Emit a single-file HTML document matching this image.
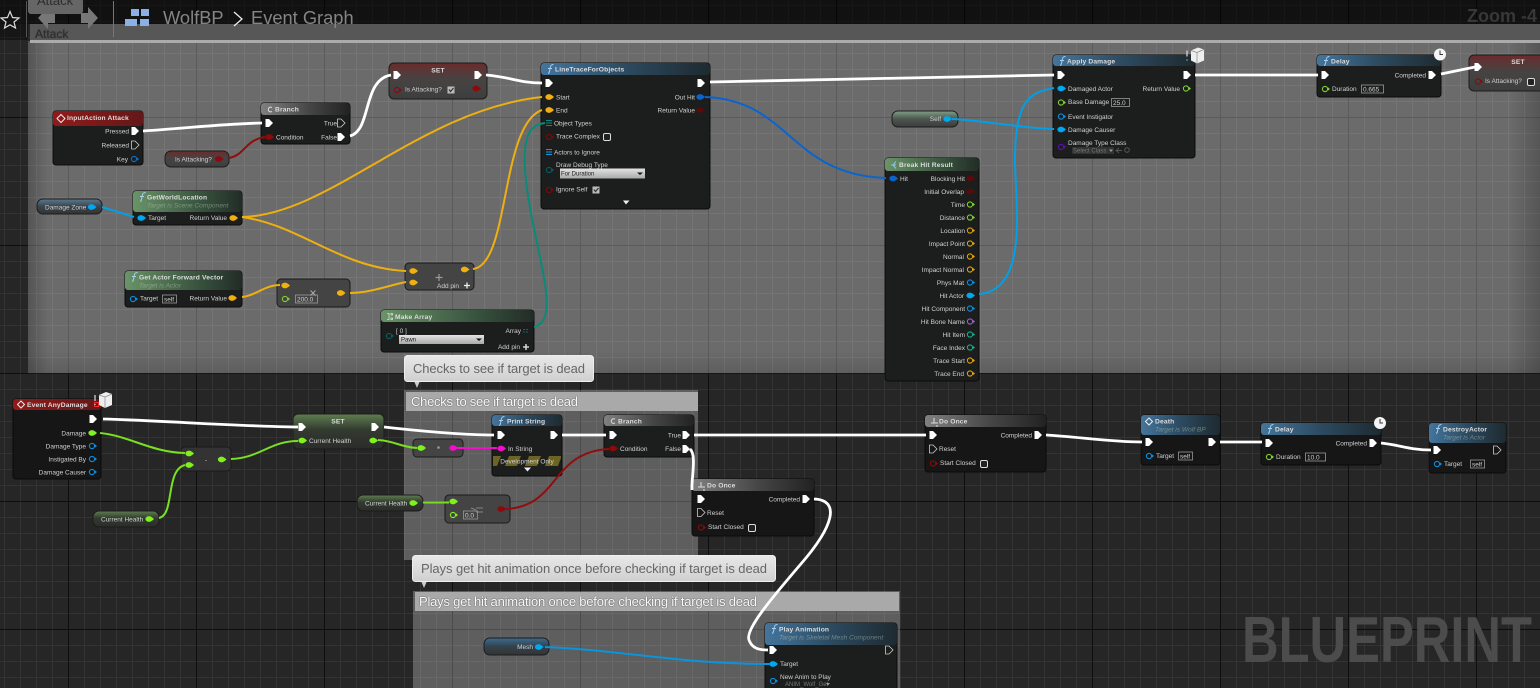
<!DOCTYPE html>
<html><head><meta charset="utf-8"><title>WolfBP Event Graph</title>
<style>
html,body{margin:0;padding:0;background:#262626;width:1540px;height:688px;overflow:hidden}
svg{display:block;font-family:"Liberation Sans",sans-serif;filter:blur(.3px)}
.t{font-size:6.5px;fill:#d0d0d0}
.r{text-anchor:end}
.c{text-anchor:middle}
.b{font-size:6.7px;font-weight:bold;fill:#dcdcdc;letter-spacing:.15px}
.s{font-size:6.6px;font-style:italic;fill:rgba(190,210,190,.45)}
.n{fill:#1c1e1d;stroke:#0b0b0b;stroke-width:1}
.g{fill:#444;stroke:#1a1a1a;stroke-width:1}
.box{fill:none;stroke:#999;stroke-width:.8}
.w{fill:none;stroke:#fff;stroke-width:2.8}
.wire{fill:none;stroke-width:2}
.ch{filter:drop-shadow(.6px .6px .4px #333)}
</style></head><body>
<svg width="1540" height="688" viewBox="0 0 1540 688" xmlns="http://www.w3.org/2000/svg">
<defs>
<pattern id="minor" width="16" height="16" patternUnits="userSpaceOnUse" x="4" y="5"><path d="M0 .5H16M.5 0V16" stroke="#343434" fill="none"/></pattern>
<pattern id="major" width="128" height="128" patternUnits="userSpaceOnUse" x="68" y="117"><path d="M0 .5H128M.5 0V128" stroke="#0e0e0e" fill="none"/></pattern>
<linearGradient id="hb"><stop offset="0" stop-color="#44759c"/><stop offset=".5" stop-color="#2c4a60"/><stop offset="1" stop-color="#1e2a30"/></linearGradient>
<linearGradient id="hg"><stop offset="0" stop-color="#6a9468"/><stop offset=".6" stop-color="#3a5540"/><stop offset="1" stop-color="#222c26"/></linearGradient>
<linearGradient id="hr"><stop offset="0" stop-color="#911a1a"/><stop offset="1" stop-color="#641818"/></linearGradient>
<linearGradient id="hk"><stop offset="0" stop-color="#808080"/><stop offset=".55" stop-color="#454545"/><stop offset="1" stop-color="#222"/></linearGradient>
<linearGradient id="gr" x2="0" y2="1"><stop offset="0" stop-color="#6b2c2c"/><stop offset=".45" stop-color="#474343"/><stop offset="1" stop-color="#3e3e3e"/></linearGradient>
<linearGradient id="gg" x2="0" y2="1"><stop offset="0" stop-color="#5f7f50"/><stop offset=".45" stop-color="#333a30"/><stop offset="1" stop-color="#2a2c2a"/></linearGradient>
<linearGradient id="gc" x2="0" y2="1"><stop offset="0" stop-color="#5a7a90"/><stop offset=".5" stop-color="#3a444c"/><stop offset="1" stop-color="#333"/></linearGradient>
<linearGradient id="gs" x2="0" y2="1"><stop offset="0" stop-color="#80a088"/><stop offset=".5" stop-color="#4c564e"/><stop offset="1" stop-color="#3c3c3c"/></linearGradient>
<linearGradient id="gm" x2="0" y2="1"><stop offset="0" stop-color="#3c6c90"/><stop offset=".5" stop-color="#33424c"/><stop offset="1" stop-color="#333"/></linearGradient>
<linearGradient id="tip" x2="0" y2="1"><stop offset="0" stop-color="#e8e8e8"/><stop offset="1" stop-color="#cfcfcf"/></linearGradient>
<linearGradient id="dd" x2="0" y2="1"><stop offset="0" stop-color="#e4e4e4"/><stop offset="1" stop-color="#aaa"/></linearGradient>
<linearGradient id="edge"><stop offset="0" stop-color="#000" stop-opacity=".22"/><stop offset="1" stop-color="#000" stop-opacity="0"/></linearGradient>
<linearGradient id="edgeb" x2="0" y2="1"><stop offset="0" stop-color="#000" stop-opacity="0"/><stop offset="1" stop-color="#000" stop-opacity=".12"/></linearGradient>
<linearGradient id="edger"><stop offset="0" stop-color="#000" stop-opacity="0"/><stop offset="1" stop-color="#000" stop-opacity=".2"/></linearGradient>
<path id="x" d="M-3.500-4H0L4 0 0 4H-3.500Z" fill="#fff"/>
<path id="xo" d="M-3.500-4H0L4 0 0 4H-3.500Z" fill="none" stroke="#ccc" stroke-width=".8"/>
<g id="d"><ellipse rx="3.600" ry="2.900" fill="currentColor"/><path d="M3-1.800 5 0 3 1.800Z" fill="currentColor"/></g>
<g id="h"><circle r="2.600" fill="none" stroke="currentColor" stroke-width="1.100"/><path d="M3-1.600 5 0 3 1.600Z" fill="currentColor"/></g>
<g id="f"><path d="M1 4.500C3 4.500 2.500 0 3.500-2.500 4-4 5-4.500 6.500-4.500M1-.5H5" fill="none" stroke="#a8d0f0" stroke-width="1"/></g>
<g id="cb"><rect x="-3.500" y="-3.500" width="7" height="7" rx="1.500" fill="#222" stroke="#ddd" stroke-width="1"/></g>
<g id="ck"><rect x="-3.500" y="-3.500" width="7" height="7" fill="#bbb"/><path d="M-2-.5-.5 1.500 2.500-2" fill="none" stroke="#333" stroke-width="1.200"/></g>
<g id="cube"><path d="M0 3 7 0 13 2V13L6 16 0 13Z" fill="#eee"/><path d="M6 5V16M0 3 6 5 13 2" fill="none" stroke="#888" stroke-width=".7"/><path d="M-4 3V9M-4 12V13" stroke="#ddd" stroke-width="1.200"/></g>
<g id="clock"><circle r="6" fill="#f4f4f4"/><path d="M0-4V0H3" fill="none" stroke="#333" stroke-width="1"/></g>
</defs>

<!-- background -->
<rect width="1540" height="688" fill="#262626"/>
<rect width="1540" height="688" fill="url(#minor)"/>
<rect width="1540" height="688" fill="url(#major)"/>
<rect width="1540" height="24" fill="#000" opacity=".55"/>
<rect y="24" width="28" height="16" fill="#000" opacity=".4"/>

<!-- top comment -->
<rect x="28" y="41" width="1512" height="332" fill="#fff" opacity=".32"/>
<rect x="28" y="41" width="20" height="332" fill="url(#edge)"/>
<rect x="28" y="350" width="1512" height="23" fill="url(#edgeb)"/>
<rect x="1510" y="41" width="30" height="332" fill="url(#edger)"/>
<rect x="30" y="24" width="1510" height="16" fill="#575757"/>
<rect x="30" y="40" width="1510" height="3" fill="#ababab"/>
<rect x="28" y="373" width="1512" height="1" fill="#161616"/>

<!-- lower comments -->
<rect x="404" y="390" width="294" height="170" fill="#fff" opacity=".26"/>
<rect x="406" y="392" width="292" height="19" fill="#a9a9a9"/>
<rect x="413" y="591" width="487" height="97" fill="#fff" opacity=".26"/>
<rect x="415" y="592" width="484" height="19" fill="#a9a9a9"/>
<text class="ch" x="411" y="406" font-size="13" fill="#fafafa" textLength="167">Checks to see if target is dead</text>
<text class="ch" x="419" y="606" font-size="13" fill="#fafafa" textLength="338">Plays get hit animation once before checking if target is dead</text>

<!-- editor top bar -->
<path d="M10 11.500 12.500 17.500 19 18 14 22 15.500 28 10 24.800 4.500 28 6 22 1 18 7.500 17.500Z" fill="none" stroke="#ddd" stroke-width="1.200"/>
<rect x="26" y="1" width="1" height="36" fill="#555"/>
<rect x="113" y="1" width="1" height="36" fill="#777"/>
<path d="M38 18 48 7V13H55V23H48V29Z" fill="#777"/>
<path d="M98 18 88 7V13H81V23H88V29Z" fill="#777"/>
<rect x="28" y="-6" width="55" height="20" rx="3" fill="#666"/>
<text x="37" y="5" font-size="13" fill="#2c2c2c">Attack</text>
<text x="35" y="38" font-size="12" fill="#2e2e2e" class="ch">Attack</text>
<g fill="#8cb0e6"><rect x="131" y="9" width="8" height="7"/><rect x="141" y="9" width="8" height="7"/><rect x="125" y="19" width="12" height="7"/><rect x="140" y="19" width="9" height="7"/></g>
<text x="163" y="24" font-size="18.300" fill="#858585">WolfBP</text>
<path d="M234 12 242 19 234 26" fill="none" stroke="#eee" stroke-width="1.300"/>
<text x="251" y="24" font-size="18.300" fill="#858585">Event Graph</text>
<text x="1467" y="22" font-size="18" font-weight="bold" fill="#383838">Zoom -4</text>

<!-- BLUEPRINT -->
<text x="1242" y="662" font-size="65" font-weight="bold" fill="#4c4c4c" textLength="290" lengthAdjust="spacingAndGlyphs">BLUEPRINT</text>

<!-- nodes -->
<g>
<!-- InputAction Attack -->
<rect class="n" x="53" y="111" width="90" height="54" rx="3"/>
<rect x="53" y="111" width="90" height="15" rx="3" fill="url(#hr)"/>
<path d="M61 114.500 65 118.500 61 122.500 57 118.500Z" fill="none" stroke="#eee"/>
<text class="b" x="67" y="120">InputAction Attack</text>
<text class="t r" x="129" y="133.500">Pressed</text><use href="#x" x="135" y="131"/>
<text class="t r" x="129" y="147.500">Released</text><use href="#xo" x="135" y="145"/>
<text class="t r" x="128" y="161.500">Key</text><use href="#h" x="134" y="159" color="#0a6ecc"/>

<!-- Branch -->
<rect class="n" x="261" y="103" width="89" height="41" rx="3"/>
<rect x="261" y="103" width="89" height="12" rx="3" fill="url(#hk)"/>
<path d="M272 107.500C267 105.500 267 113.500 272 111.500" fill="none" stroke="#ddd"/>
<text class="b" x="275" y="111.500">Branch</text>
<use href="#x" x="269" y="123"/>
<text class="t r" x="337" y="125.500">True</text><use href="#xo" x="341" y="123"/>
<use href="#d" x="269" y="137" color="#8c0a0a"/><text class="t" x="276" y="139.500">Condition</text>
<text class="t r" x="337" y="139.500">False</text><use href="#x" x="341" y="137"/>

<!-- Is Attacking var -->
<rect x="165" y="151" width="64" height="16" rx="6" fill="url(#gr)" stroke="#1c1c1c"/>
<text class="t" x="175" y="161.500">Is Attacking?</text>
<use href="#d" x="218.500" y="159" color="#8c0a0a"/>

<!-- SET red -->
<rect x="389" y="63" width="98" height="36" rx="5" fill="url(#gr)" stroke="#1c1c1c"/>
<text class="b c" x="438" y="72.500">SET</text>
<use href="#x" x="397" y="75"/><use href="#x" x="478" y="75"/>
<use href="#h" x="397" y="90" color="#8c0a0a"/><text class="t" x="405" y="91.500">Is Attacking?</text>
<use href="#ck" x="451" y="90"/>
<use href="#d" x="476" y="88.500" color="#8c0a0a"/>

<!-- Damage Zone -->
<rect x="37" y="199" width="65" height="15" rx="6" fill="url(#gc)" stroke="#1c1c1c"/>
<text class="t" x="45" y="209.500">Damage Zone</text>
<use href="#d" x="91.500" y="207" color="#00a8f0"/>

<!-- GetWorldLocation -->
<rect class="n" x="133" y="191" width="109" height="34" rx="3"/>
<rect x="133" y="191" width="109" height="21" rx="3" fill="url(#hg)"/>
<use href="#f" x="139" y="197"/>
<text class="b" x="147" y="199.500">GetWorldLocation</text>
<text class="s" x="147" y="207.500">Target is Scene Component</text>
<use href="#d" x="141" y="218" color="#00a8f0"/><text class="t" x="148" y="220">Target</text>
<text class="t r" x="227" y="220">Return Value</text><use href="#d" x="233" y="218" color="#f0b010"/>

<!-- Forward vector -->
<rect class="n" x="125" y="271" width="117" height="36" rx="3"/>
<rect x="125" y="271" width="117" height="19" rx="3" fill="url(#hg)"/>
<use href="#f" x="131" y="277"/>
<text class="b" x="139" y="279.500">Get Actor Forward Vector</text>
<text class="s" x="139" y="287.500">Target is Actor</text>
<use href="#h" x="133" y="299" color="#0a8fe0"/><text class="t" x="140" y="300.500">Target</text>
<rect class="box" x="162.500" y="295" width="14" height="8"/><text class="t" x="164" y="301.500">self</text>
<text class="t r" x="227" y="300.500">Return Value</text><use href="#d" x="232" y="298" color="#f0b010"/>

<!-- multiply -->
<rect class="g" x="277" y="279" width="73" height="28" rx="4"/>
<use href="#d" x="285" y="285.500" color="#f0b010"/>
<use href="#h" x="285" y="299" color="#7fd030"/>
<rect class="box" x="295.500" y="295" width="22" height="8"/><text class="t" x="297" y="301.500">200.0</text>
<path d="M310.500 290.500 315.500 295.500M315.500 290.500 310.500 295.500" stroke="#aaa" stroke-width="1"/>
<use href="#d" x="340.500" y="293" color="#f0b010"/>

<!-- add -->
<rect class="g" x="405" y="263" width="69" height="27" rx="4"/>
<use href="#d" x="413" y="271" color="#f0b010"/><use href="#d" x="413" y="282.500" color="#f0b010"/>
<use href="#d" x="464.500" y="269.500" color="#f0b010"/>
<path d="M439 274V281M435.500 277.500H442.500" stroke="#999" stroke-width="1.200"/>
<text class="t" x="437" y="288">Add pin</text>
<path d="M467 282.500V288.500M464 285.500H470" stroke="#eee" stroke-width="1.300"/>

<!-- Make Array -->
<rect class="n" x="381" y="310" width="153" height="42" rx="3"/>
<rect x="381" y="310" width="153" height="12" rx="3" fill="url(#hg)"/>
<path d="M387 313.500H389V319.500H387M391 313.500H392.500V315H391ZM391 318H392.500V319.500H391Z" fill="none" stroke="#ddd" stroke-width=".8"/>
<text class="b" x="395" y="319">Make Array</text>
<use href="#h" x="389" y="336" color="#0a5c5c"/>
<text class="t" x="396" y="333">[ 0 ]</text>
<rect x="399" y="335" width="85" height="9" fill="url(#dd)"/><text x="401" y="341.500" font-size="6" fill="#222">Pawn</text><path d="M476 338.500H482L479 341Z" fill="#111"/>
<text class="t r" x="521" y="333">Array</text>
<path d="M523 329.500h2m1 0h2M523 332h2m1 0h2" stroke="#0a6a6a"/>
<text class="t r" x="520" y="349">Add pin</text>
<path d="M526 344V350M523 347H529" stroke="#eee" stroke-width="1.300"/>

<!-- LineTrace -->
<rect class="n" x="541" y="63" width="169" height="146" rx="3"/>
<rect x="541" y="63" width="169" height="12" rx="3" fill="url(#hb)"/>
<use href="#f" x="547" y="69"/>
<text class="b" x="555" y="71.500">LineTraceForObjects</text>
<use href="#x" x="549" y="83"/><use href="#x" x="701" y="83"/>
<use href="#d" x="549" y="97" color="#f0b010"/><text class="t" x="556" y="99.500">Start</text>
<text class="t r" x="695" y="99.500">Out Hit</text><use href="#d" x="700" y="97" color="#0a64d0"/>
<use href="#d" x="549" y="110" color="#f0b010"/><text class="t" x="556" y="112.500">End</text>
<text class="t r" x="695" y="112.500">Return Value</text><use href="#d" x="700" y="110" color="#5a0a0a"/>
<path d="M546 120.500H552M546 123H552M546 125.500H552" stroke="#0a8a7a" stroke-width="1.100"/>
<text class="t" x="554" y="125.500">Object Types</text>
<use href="#h" x="549" y="137" color="#7a0a0a"/><text class="t" x="556" y="138.500">Trace Complex</text><use href="#cb" x="607" y="137"/>
<path d="M546 149.500H552M546 152H552M546 154.500H552" stroke="#0a9ae0" stroke-width="1.100"/>
<text class="t" x="554" y="154.500">Actors to Ignore</text>
<use href="#h" x="549" y="170" color="#0a5c5c"/><text class="t" x="556" y="167">Draw Debug Type</text>
<rect x="560" y="168.500" width="85" height="10" fill="url(#dd)"/><text x="561" y="175.500" font-size="6" fill="#222">For Duration</text><path d="M637 172.500H643L640 175Z" fill="#111"/>
<use href="#h" x="549" y="190" color="#7a0a0a"/><text class="t" x="556" y="191.500">Ignore Self</text><use href="#ck" x="596" y="190"/>
<path d="M623 200.500H629.500L626 204.500Z" fill="#eee"/>

<!-- Self -->
<rect x="892" y="111" width="66" height="16" rx="6" fill="url(#gs)" stroke="#1c1c1c"/>
<text class="t r" x="941" y="121">Self</text>
<use href="#d" x="947" y="119" color="#00a8f0"/>

<!-- Break Hit Result -->
<rect class="n" x="885" y="158" width="94" height="223" rx="3"/>
<rect x="885" y="158" width="94" height="13" rx="3" fill="url(#hg)"/>
<path d="M891 165H896M896 161.500 893 165 896 168.500" fill="none" stroke="#8cc0ff"/>
<text class="b" x="899" y="167">Break Hit Result</text>
<use href="#d" x="893" y="178.500" color="#0a64d0"/><text class="t" x="900" y="181">Hit</text>
<text class="t r" x="965" y="181">Blocking Hit</text><use href="#d" x="970" y="178.500" color="#5a0a0a"/>
<text class="t r" x="964" y="194">Initial Overlap</text><use href="#d" x="970" y="191.500" color="#5a0a0a"/>
<text class="t r" x="965" y="207">Time</text><use href="#h" x="970" y="204.500" color="#7fd030"/>
<text class="t r" x="965" y="220">Distance</text><use href="#h" x="970" y="217.500" color="#7fd030"/>
<text class="t r" x="965" y="233">Location</text><use href="#h" x="970" y="230.500" color="#e0a010"/>
<text class="t r" x="965" y="246">Impact Point</text><use href="#h" x="970" y="243.500" color="#e0a010"/>
<text class="t r" x="964" y="259">Normal</text><use href="#h" x="970" y="256.500" color="#e0a010"/>
<text class="t r" x="964" y="272">Impact Normal</text><use href="#h" x="970" y="269.500" color="#e0a010"/>
<text class="t r" x="964" y="285">Phys Mat</text><use href="#h" x="970" y="282.500" color="#0a8fe0"/>
<text class="t r" x="964" y="298">Hit Actor</text><use href="#d" x="970" y="295.500" color="#00a8f0"/>
<text class="t r" x="965" y="311">Hit Component</text><use href="#h" x="970" y="308.500" color="#0a8fe0"/>
<text class="t r" x="965" y="324">Hit Bone Name</text><use href="#h" x="970" y="321.500" color="#9a60d0"/>
<text class="t r" x="965" y="337">Hit Item</text><use href="#h" x="970" y="334.500" color="#10b088"/>
<text class="t r" x="965" y="350">Face Index</text><use href="#h" x="970" y="347.500" color="#10b088"/>
<text class="t r" x="965" y="363">Trace Start</text><use href="#h" x="970" y="360.500" color="#e0a010"/>
<text class="t r" x="964" y="376">Trace End</text><use href="#h" x="970" y="373.500" color="#e0a010"/>

<!-- Apply Damage -->
<rect class="n" x="1053" y="55" width="142" height="103" rx="3"/>
<rect x="1053" y="55" width="142" height="11" rx="3" fill="url(#hb)"/>
<use href="#f" x="1059" y="61"/>
<text class="b" x="1067" y="63.500">Apply Damage</text>
<use href="#cube" x="1191" y="47.500"/>
<use href="#x" x="1061" y="75"/><use href="#x" x="1187" y="75"/>
<use href="#d" x="1061" y="88.500" color="#00a8f0"/><text class="t" x="1068" y="91">Damaged Actor</text>
<text class="t r" x="1180" y="91">Return Value</text><use href="#h" x="1186" y="88.500" color="#7fd030"/>
<use href="#h" x="1061" y="102.500" color="#7fd030"/><text class="t" x="1068" y="104">Base Damage</text>
<rect class="box" x="1111.500" y="98.500" width="18" height="8"/><text class="t" x="1113" y="105">25.0</text>
<use href="#h" x="1061" y="116.500" color="#0a8fe0"/><text class="t" x="1068" y="119">Event Instigator</text>
<use href="#d" x="1061" y="129.500" color="#00a8f0"/><text class="t" x="1068" y="132">Damage Causer</text>
<use href="#h" x="1061" y="147" color="#5a10b0"/><text class="t" x="1068" y="145">Damage Type Class</text>
<rect x="1072" y="147" width="42" height="7" fill="#333"/><text x="1073" y="152.500" font-size="6" fill="#777">Select Class</text><path d="M1109 149.500H1113L1111 152Z" fill="#999"/>
<path d="M1116 150.500H1122M1119 148 1116 150.500 1119 153" fill="none" stroke="#555"/><circle cx="1127" cy="150" r="2.300" fill="none" stroke="#555"/>

<!-- Delay -->
<rect class="n" x="1317" y="55" width="124" height="42" rx="3"/>
<rect x="1317" y="55" width="124" height="11" rx="3" fill="url(#hb)"/>
<use href="#f" x="1323" y="61"/>
<text class="b" x="1331" y="63.500">Delay</text>
<use href="#clock" x="1440" y="54.500"/>
<use href="#x" x="1325" y="75"/>
<text class="t r" x="1426" y="77.500">Completed</text><use href="#x" x="1432" y="75"/>
<use href="#h" x="1325" y="89" color="#7fd030"/><text class="t" x="1332" y="91">Duration</text>
<rect class="box" x="1361.500" y="85" width="22" height="8"/><text class="t" x="1363" y="91.500">0.665</text>

<!-- SET right -->
<rect x="1469" y="55" width="75" height="36" rx="5" fill="url(#gr)" stroke="#1c1c1c"/>
<text class="b c" x="1518" y="64">SET</text>
<use href="#x" x="1478" y="67"/>
<use href="#h" x="1478" y="81.500" color="#8c0a0a"/><text class="t" x="1485" y="83">Is Attacking?</text>
<use href="#cb" x="1531" y="82"/>

<!-- Event AnyDamage -->
<rect class="n" x="13" y="399" width="88" height="80" rx="3" style="fill:#161616"/>
<rect x="13" y="399" width="88" height="11" rx="3" fill="url(#hr)"/>
<path d="M21 401 24.500 404.500 21 408 17.500 404.500Z" fill="none" stroke="#eee"/>
<text class="b" x="27" y="407">Event AnyDamage</text>
<rect x="94.500" y="402.500" width="4" height="4" fill="none" stroke="#f03030"/>
<use href="#cube" x="99" y="392"/>
<use href="#x" x="93" y="419"/>
<text class="t r" x="86" y="435.500">Damage</text><use href="#d" x="92" y="433" color="#80f020"/>
<text class="t r" x="86" y="448.500">Damage Type</text><use href="#h" x="92" y="446" color="#0a8fe0"/>
<text class="t r" x="86" y="461.500">Instigated By</text><use href="#h" x="92" y="459" color="#0a8fe0"/>
<text class="t r" x="86" y="474.500">Damage Causer</text><use href="#h" x="92" y="472" color="#0a8fe0"/>

<!-- minus -->
<rect class="g" x="181" y="447" width="50" height="24" rx="4" style="fill:#333"/>
<use href="#d" x="189" y="453.500" color="#80f020"/><use href="#d" x="189" y="465" color="#80f020"/>
<use href="#d" x="221.500" y="459.500" color="#80f020"/>
<text class="t c" x="206" y="462">-</text>

<!-- Current Health var -->
<rect x="93" y="511" width="66" height="16" rx="6" fill="url(#gg)" stroke="#1c1c1c"/>
<text class="t" x="101" y="521.500">Current Health</text>
<use href="#d" x="149" y="519" color="#80f020"/>

<!-- SET green -->
<rect x="293" y="414" width="91" height="35" rx="5" fill="url(#gg)" stroke="#1c1c1c"/>
<text class="b c" x="338" y="423.500">SET</text>
<use href="#x" x="302" y="427"/><use href="#x" x="375" y="427"/>
<use href="#d" x="302" y="440.500" color="#80f020"/><text class="t" x="309" y="443">Current Health</text>
<use href="#d" x="373" y="440.500" color="#80f020"/>

<!-- converter -->
<rect class="g" x="413" y="439" width="50" height="18" rx="4"/>
<use href="#d" x="421" y="448" color="#80f020"/><circle cx="438.500" cy="447.500" r="1.300" fill="#999"/>
<use href="#d" x="453" y="448" color="#f010c8"/>

<!-- Print String -->
<rect class="n" x="492" y="415" width="70" height="61" rx="3"/>
<rect x="492" y="415" width="70" height="11" rx="3" fill="url(#hb)"/>
<use href="#f" x="498" y="421"/>
<text class="b" x="507" y="423.500">Print String</text>
<use href="#x" x="501" y="435"/><use href="#x" x="554" y="435"/>
<use href="#d" x="501" y="448.500" color="#f010c8"/><text class="t" x="508" y="451">In String</text>
<path d="M493 456H501L497 466H493ZM509 456H521L517 466H505ZM529 456H541L537 466H525ZM549 456H561V458L558 466H545Z" fill="#6c6424"/>
<text class="t c" x="527" y="463.500">Development Only</text>
<path d="M524 467.500H531L527.500 471.500Z" fill="#eee"/>

<!-- Branch 2 -->
<rect class="n" x="604" y="415" width="90" height="42" rx="3"/>
<rect x="604" y="415" width="90" height="11" rx="3" fill="url(#hk)"/>
<path d="M615 419C610 417.500 610 425 615 423" fill="none" stroke="#ddd"/>
<text class="b" x="618" y="423.500">Branch</text>
<use href="#x" x="613" y="435"/>
<text class="t r" x="681" y="437.500">True</text><use href="#x" x="686" y="435"/>
<use href="#d" x="613" y="448.500" color="#8c0a0a"/><text class="t" x="620" y="451">Condition</text>
<text class="t r" x="681" y="451">False</text><use href="#x" x="686" y="449"/>

<!-- Current Health 2 -->
<rect x="357" y="495" width="66" height="16" rx="6" fill="url(#gg)" stroke="#1c1c1c"/>
<text class="t" x="365" y="505.500">Current Health</text>
<use href="#d" x="413" y="503" color="#80f020"/>

<!-- compare -->
<rect class="g" x="445" y="495" width="65" height="28" rx="4"/>
<use href="#d" x="453" y="501.500" color="#80f020"/>
<use href="#h" x="453" y="515" color="#80f020"/>
<rect class="box" x="463.500" y="511" width="14" height="8"/><text class="t" x="465" y="517.500">0.0</text>
<path d="M476 508H483M476 512H483M476 510 471 508" stroke="#999" stroke-width=".8"/>
<use href="#d" x="501" y="509" color="#8c0a0a"/>

<!-- Do Once 1 -->
<rect class="n" x="692" y="479" width="122" height="57" rx="3" style="fill:#161616"/>
<rect x="692" y="479" width="122" height="12" rx="3" fill="url(#hk)"/>
<path d="M698 487H705M701 482V487M703 490H705" fill="none" stroke="#ddd"/>
<text class="b" x="707" y="487.500">Do Once</text>
<use href="#x" x="701" y="499"/>
<text class="t r" x="800" y="501.500">Completed</text><use href="#x" x="806" y="499"/>
<use href="#xo" x="701" y="512.500"/><text class="t" x="707" y="515">Reset</text>
<use href="#h" x="701" y="527.500" color="#8c0a0a"/><text class="t" x="708" y="529">Start Closed</text>
<use href="#cb" x="752" y="528"/>

<!-- Do Once 2 -->
<rect class="n" x="925" y="415" width="121" height="57" rx="3" style="fill:#161616"/>
<rect x="925" y="415" width="121" height="12" rx="3" fill="url(#hk)"/>
<path d="M931 423H938M934 418V423M936 426H938" fill="none" stroke="#ddd"/>
<text class="b" x="939" y="423.500">Do Once</text>
<use href="#x" x="933" y="435"/>
<text class="t r" x="1032" y="437.500">Completed</text><use href="#x" x="1038" y="435"/>
<use href="#xo" x="933" y="449"/><text class="t" x="939" y="451">Reset</text>
<use href="#h" x="933" y="463.500" color="#8c0a0a"/><text class="t" x="940" y="465">Start Closed</text>
<use href="#cb" x="984" y="464"/>

<!-- Death -->
<rect class="n" x="1141" y="415" width="79" height="50" rx="3" style="fill:#161616"/>
<rect x="1141" y="415" width="79" height="20" rx="3" fill="url(#hb)"/>
<path d="M1149 418 1152.500 421.500 1149 425 1145.500 421.500Z" fill="none" stroke="#eee"/>
<text class="b" x="1155" y="423.500">Death</text>
<text class="s" x="1155" y="431.500">Target is Wolf BP</text>
<use href="#x" x="1149" y="442"/><use href="#x" x="1212" y="442"/>
<use href="#h" x="1149" y="456" color="#0a8fe0"/><text class="t" x="1156" y="458">Target</text>
<rect class="box" x="1178.500" y="452" width="14" height="8"/><text class="t" x="1180" y="458.500">self</text>

<!-- Delay 2 -->
<rect class="n" x="1261" y="423" width="120" height="42" rx="3" style="fill:#161616"/>
<rect x="1261" y="423" width="120" height="12" rx="3" fill="url(#hb)"/>
<use href="#f" x="1267" y="429"/>
<text class="b" x="1275" y="431.500">Delay</text>
<use href="#clock" x="1380" y="423"/>
<use href="#x" x="1269" y="443"/>
<text class="t r" x="1367" y="445.500">Completed</text><use href="#x" x="1373" y="443"/>
<use href="#h" x="1269" y="457" color="#7fd030"/><text class="t" x="1276" y="459">Duration</text>
<rect class="box" x="1305.500" y="453" width="20" height="8"/><text class="t" x="1307" y="459.500">10.0</text>

<!-- DestroyActor -->
<rect class="n" x="1429" y="423" width="77" height="50" rx="3" style="fill:#161616"/>
<rect x="1429" y="423" width="77" height="20" rx="3" fill="url(#hb)"/>
<use href="#f" x="1435" y="429"/>
<text class="b" x="1443" y="431.500">DestroyActor</text>
<text class="s" x="1443" y="439.500">Target is Actor</text>
<use href="#x" x="1437" y="450"/><use href="#xo" x="1497" y="450"/>
<use href="#h" x="1437" y="464" color="#0a8fe0"/><text class="t" x="1444" y="466">Target</text>
<rect class="box" x="1470.500" y="460" width="14" height="8"/><text class="t" x="1472" y="466.500">self</text>

<!-- Mesh -->
<rect x="484" y="638" width="65" height="17" rx="6" fill="url(#gm)" stroke="#1c1c1c"/>
<text class="t r" x="533" y="649">Mesh</text>
<use href="#d" x="538.500" y="647" color="#00a8f0"/>

<!-- Play Animation -->
<rect class="n" x="765" y="623" width="132" height="70" rx="3"/>
<rect x="765" y="623" width="132" height="22" rx="3" fill="url(#hb)"/>
<use href="#f" x="771" y="629"/>
<text class="b" x="779" y="631.500">Play Animation</text>
<text class="s" x="779" y="639.500">Target is Skeletal Mesh Component</text>
<use href="#x" x="773" y="650"/><use href="#xo" x="889" y="650"/>
<use href="#d" x="773" y="664" color="#00a8f0"/><text class="t" x="780" y="666">Target</text>
<use href="#h" x="773" y="681" color="#0a8fe0"/><text class="t" x="780" y="679">New Anim to Play</text>
<text x="785" y="686" font-size="6" fill="#777">ANIM_Wolf_Get</text><path d="M826 683H830L828 685.500Z" fill="#999"/>
</g>

<!-- wires -->
<g>
<path class="w" d="M143 131C190 128 220 124 262 123"/>
<path class="w" d="M350 136C372 130 362 80 391 75"/>
<path class="w" d="M486 75C510 77 520 83 542 83"/>
<path class="w" d="M710 82C800 80 960 77 1054 75"/>
<path class="w" d="M1195 75H1318"/>
<path class="w" d="M1441 74 1475 67"/>
<path class="wire" stroke="#eeb010" d="M242 217C330 215 420 110 542 97"/>
<path class="wire" stroke="#eeb010" d="M242 217C300 225 340 268 406 271"/>
<path class="wire" stroke="#eeb010" d="M242 297C255 296 265 285 280 285"/>
<path class="wire" stroke="#eeb010" d="M350 293C370 293 390 285 406 282"/>
<path class="wire" stroke="#eeb010" d="M473 269C510 265 500 125 542 110"/>
<path class="wire" stroke="#0a8a78" d="M534 327C565 320 530 240 525 170 523 135 530 125 545 123"/>
<path class="wire" stroke="#0a64d0" d="M705 97C790 100 790 175 886 178"/>
<path class="wire" stroke="#00a0e8" d="M952 119C980 120 1020 128 1054 129"/>
<path class="wire" stroke="#00a0e8" d="M979 294C1030 290 1015 200 1015 160 1015 100 1030 92 1054 88"/>
<path class="wire" stroke="#00a0e8" d="M102 207 134 217"/>
<path class="wire" stroke="#900e0e" d="M229 158C245 155 245 140 265 137"/>
<path class="w" d="M103 419C170 421 230 426 298 427"/>
<path class="w" d="M384 427C420 431 460 435 494 435"/>
<path class="w" d="M562 435H606"/>
<path class="w" d="M694 435H926"/>
<path class="w" d="M1046 435C1080 437 1110 442 1142 442"/>
<path class="w" d="M1220 442H1262"/>
<path class="w" d="M1381 443C1400 445 1410 450 1431 450"/>
<path class="w" d="M690 449C697 455 691 480 692 490"/>
<path class="w" d="M814 499C840 500 835 525 800 565 770 600 745 630 749 640 752 648 758 650 768 650"/>
<path class="wire" stroke="#78e020" d="M100 433C130 436 150 452 185 453"/>
<path class="wire" stroke="#78e020" d="M231 459C260 458 270 441 298 441"/>
<path class="wire" stroke="#78e020" d="M159 518C175 515 165 470 185 465"/>
<path class="wire" stroke="#78e020" d="M378 440C395 441 400 447 417 448"/>
<path class="wire" stroke="#78e020" d="M423 502.500H449"/>
<path class="wire" stroke="#f010c8" d="M457 448H497"/>
<path class="wire" stroke="#900e0e" d="M505 509C560 507 550 452 609 449"/>
<path class="wire" stroke="#0a94dc" d="M545 647C620 650 680 664 770 664"/>
</g>

<!-- tooltips -->
<path d="M414 381 417 388 420 381Z" fill="#ccc"/>
<rect x="404.500" y="355.500" width="189" height="26" rx="3" fill="url(#tip)" stroke="#eee"/>
<text x="413" y="373" font-size="13" fill="#666" textLength="172">Checks to see if target is dead</text>
<path d="M421 581 424 588 427 581Z" fill="#ccc"/>
<rect x="412.500" y="555.500" width="363" height="26" rx="3" fill="url(#tip)" stroke="#eee"/>
<text x="421" y="573" font-size="13" fill="#666" textLength="346">Plays get hit animation once before checking if target is dead</text>
</svg>
</body></html>
